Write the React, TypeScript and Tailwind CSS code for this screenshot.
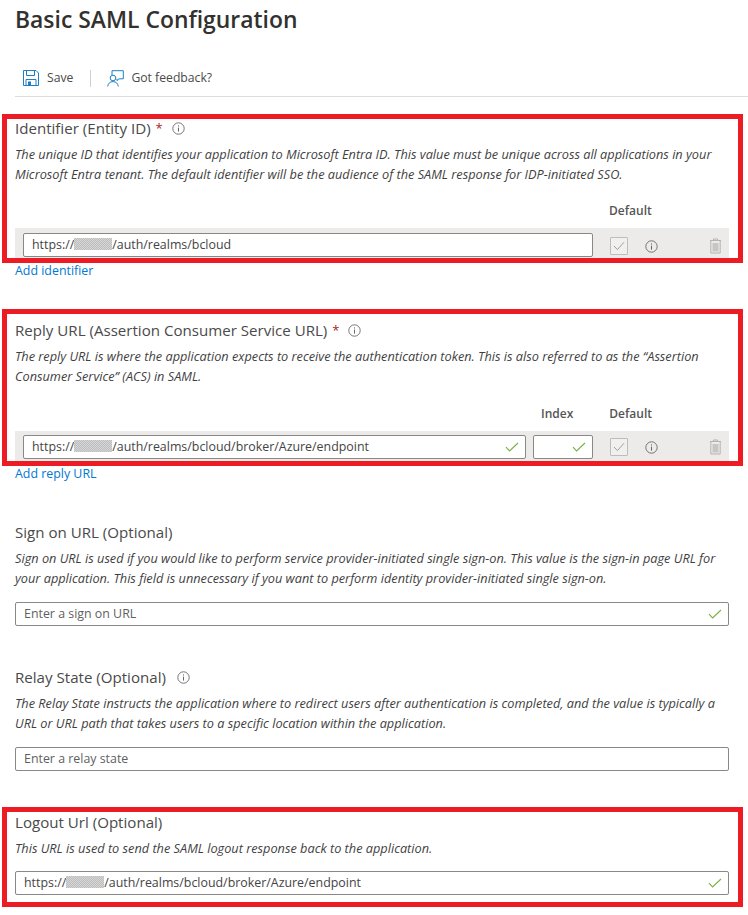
import React from "react";

const font = "font-['Open_Sans','Noto_Sans',sans-serif]";

const InfoIcon = ({ className = "" }: { className?: string }) => (
  <svg className={className} width="13" height="13" viewBox="0 0 13 13" fill="none">
    <circle cx="6.5" cy="6.5" r="5.7" stroke="#666" strokeWidth="0.9" />
    <rect x="6" y="5.6" width="1" height="4" fill="#666" />
    <rect x="6" y="3.4" width="1" height="1.1" fill="#666" />
  </svg>
);

const Check = ({ className = "" }: { className?: string }) => (
  <svg className={className} width="14" height="10" viewBox="0 0 14 10" fill="none">
    <path d="M1 5.2 L4.6 9 L13 1" stroke="#7cb342" strokeWidth="1.2" />
  </svg>
);

const Redacted = () => (
  <span className="inline-block h-[12px] w-[38px] bg-[repeating-conic-gradient(#bdbdbd_0_25%,#d6d6d6_0_50%)] bg-[length:2px_2px] align-[-1px]" />
);

const Label = ({ children, className = "" }: { children: React.ReactNode; className?: string }) => (
  <div className={`flex h-[20px] items-center text-[15.1px] leading-[20px] text-[#4a4a4a] ${className}`}>{children}</div>
);

const Required = () => <span className="ml-[5px] text-[13px] text-[#a4262c]">*</span>;

const Desc = ({ lines }: { lines: string[] }) => (
  <p className="mt-[6px] text-[12.74px] italic leading-[20px] text-[#3f3f3f]">
    {lines.map((l) => (
      <span key={l} className="block whitespace-nowrap">{l}</span>
    ))}
  </p>
);

const TextBox = ({ children, check, placeholder }: { children?: React.ReactNode; check?: boolean; placeholder?: string }) => (
  <div className="flex h-[24px] items-center justify-between rounded-[2px] border border-[#8a8886] bg-white pl-[8px] pr-[6px] text-[12.4px] text-[#444]">
    <span className={placeholder ? "text-[#5f5f5f]" : ""}>{placeholder || children}</span>
    {check && <Check />}
  </div>
);

const RowActions = () => (
  <div className="flex items-center">
    <div className="ml-[17px] flex h-[18px] w-[18px] items-center justify-center rounded-[1px] border border-[#bdbdbd] bg-[#f1f0ef]">
      <svg width="12" height="10" viewBox="0 0 12 10" fill="none">
        <path d="M1 5 L4.4 8.6 L11 1.2" stroke="#a19f9d" strokeWidth="1" />
      </svg>
    </div>
    <InfoIcon className="ml-[17px]" />
    <svg className="ml-[51px]" width="13" height="16" viewBox="0 0 13 16" fill="none">
      <path d="M1 2.5H12M4.5 2.5V1H8.5V2.5M1.8 2.5V15H11.2V2.5" stroke="#b5b3b1" strokeWidth="1" />
      <rect x="3.5" y="5" width="6" height="8.5" fill="#c8c6c4" />
    </svg>
  </div>
);

const ColHead = ({ children, className = "" }: { children: React.ReactNode; className?: string }) => (
  <span className={`text-[12px] font-semibold text-[#555] ${className}`}>{children}</span>
);

export default function App() {
  return (
    <div className={`h-[915px] w-[748px] overflow-hidden bg-white ${font}`}>
      <h1 className="pl-[15px] pt-[4px] text-[22.9px] font-semibold leading-[32px] text-[#323130]">
        Basic SAML Configuration
      </h1>

      <div className="ml-[15px] mt-[24px] flex h-[37px] items-center border-b border-[#dcdcdc] text-[12.2px] text-[#4a4a4a]">
        <svg className="ml-[8px]" width="16" height="16" viewBox="0 0 16 16" fill="none">
          <path d="M.5.5H13L15.5 3V15.5H.5Z" stroke="#1f7fc4" strokeWidth="1" />
          <path d="M3.5 .5V5.5H11.5V.5M3 15.5V9.5H13V15.5" stroke="#1f7fc4" strokeWidth="1" />
          <rect x="5" y="11.5" width="3" height="4" fill="#1f7fc4" />
        </svg>
        <span className="ml-[8px]">Save</span>
        <span className="ml-[17px] h-[17px] w-px bg-[#d0d0d0]" />
        <svg className="ml-[16px]" width="17" height="17" viewBox="0 0 17 17" fill="none">
          <path d="M5 5V.7H16.3V8.8H12L10 10.6V8.8" stroke="#1f7fc4" strokeWidth="1" />
          <circle cx="6" cy="8" r="2.8" stroke="#1f7fc4" strokeWidth="1" />
          <path d="M.7 16.5C1 13.5 3 11.6 6 11.6S11 13.5 11.3 16.5" stroke="#1f7fc4" strokeWidth="1" />
        </svg>
        <span className="ml-[7px]">Got feedback?</span>
      </div>

      {/* Identifier */}
      <section className="ml-[2px] mt-[17px] h-[149px] w-[741px] border-[5px] border-[#ed1c24] pl-[8px]">
        <Label className="-mt-[1px]">
          Identifier (Entity ID) <Required />
          <InfoIcon className="ml-[9px]" />
        </Label>
        <Desc
          lines={[
            "The unique ID that identifies your application to Microsoft Entra ID. This value must be unique across all applications in your",
            "Microsoft Entra tenant. The default identifier will be the audience of the SAML response for IDP-initiated SSO.",
          ]}
        />
        <div className="mt-[18px] flex h-[20px] pl-[594px]">
          <ColHead>Default</ColHead>
        </div>
        <div className="mt-[6px] flex h-[30px] w-[714px] items-end bg-[#edebe9] pl-[8px] pb-[1px]">
          <div className="w-[570px]">
            <TextBox>
              https://<Redacted />/auth/realms/bcloud
            </TextBox>
          </div>
          <div className="pb-[2px]"><RowActions /></div>
        </div>
      </section>
      <a className="ml-[15px] -mt-[2px] block text-[12.4px] leading-[20px] text-[#0078d4]">Add identifier</a>

      {/* Reply URL */}
      <section className="ml-[2px] mt-[28px] h-[157px] w-[741px] border-[5px] border-[#ed1c24] pl-[8px] pt-[6px]">
        <Label>
          Reply URL (Assertion Consumer Service URL) <Required />
          <InfoIcon className="ml-[9px]" />
        </Label>
        <Desc
          lines={[
            "The reply URL is where the application expects to receive the authentication token. This is also referred to as the “Assertion",
            "Consumer Service” (ACS) in SAML.",
          ]}
        />
        <div className="mt-[19px] flex h-[20px] pl-[526px]">
          <ColHead>Index</ColHead>
          <ColHead className="ml-[36px]">Default</ColHead>
        </div>
        <div className="mt-[6px] flex h-[30px] w-[714px] items-center bg-[#edebe9] pl-[8px] pt-[2px]">
          <div className="w-[503px]">
            <TextBox check>
              https://<Redacted />/auth/realms/bcloud/broker/Azure/endpoint
            </TextBox>
          </div>
          <div className="ml-[7px] w-[60px]">
            <TextBox check />
          </div>
          <RowActions />
        </div>
      </section>
      <a className="ml-[15px] -mt-[2px] block text-[12.4px] leading-[20px] text-[#0078d4]">Add reply URL</a>

      {/* Sign on URL */}
      <section className="ml-[15px] mt-[38px] w-[714px]">
        <Label>Sign on URL (Optional)</Label>
        <Desc
          lines={[
            "Sign on URL is used if you would like to perform service provider-initiated single sign-on. This value is the sign-in page URL for",
            "your application. This field is unnecessary if you want to perform identity provider-initiated single sign-on.",
          ]}
        />
        <div className="mt-[14px]">
          <TextBox check placeholder="Enter a sign on URL" />
        </div>
      </section>

      {/* Relay State */}
      <section className="ml-[15px] mt-[41px] w-[714px]">
        <Label>
          Relay State (Optional)
          <InfoIcon className="ml-[11px]" />
        </Label>
        <Desc
          lines={[
            "The Relay State instructs the application where to redirect users after authentication is completed, and the value is typically a",
            "URL or URL path that takes users to a specific location within the application.",
          ]}
        />
        <div className="mt-[14px]">
          <TextBox placeholder="Enter a relay state" />
        </div>
      </section>

      {/* Logout Url */}
      <section className="ml-[2px] mt-[36px] h-[100px] w-[741px] border-[5px] border-[#ed1c24] pl-[8px]">
        <Label>Logout Url (Optional)</Label>
        <Desc lines={["This URL is used to send the SAML logout response back to the application."]} />
        <div className="mt-[13px] w-[714px]">
          <TextBox check>
            https://<Redacted />/auth/realms/bcloud/broker/Azure/endpoint
          </TextBox>
        </div>
      </section>
    </div>
  );
}
